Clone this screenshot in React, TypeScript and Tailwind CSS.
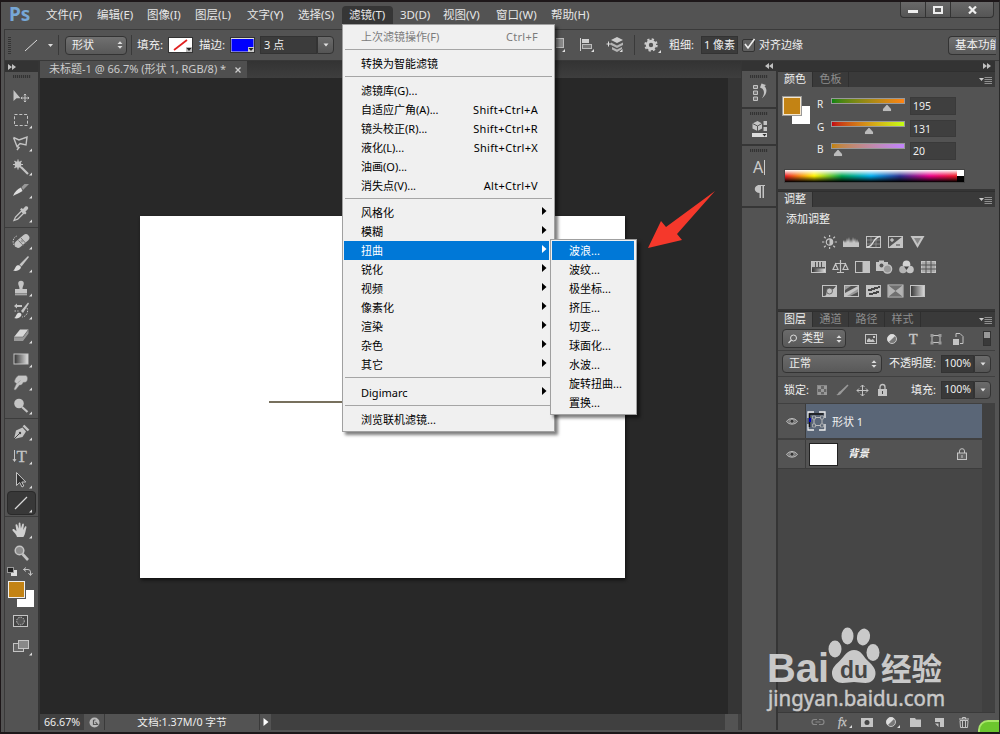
import { ReactNode } from 'react';
import clsx from 'clsx';

const menus: [string, string][] = [
  ['文件(F)', 'w-[51px]'],
  ['编辑(E)', 'w-[50px]'],
  ['图像(I)', 'w-[48px]'],
  ['图层(L)', 'w-[52px]'],
  ['文字(Y)', 'w-[51px]'],
  ['选择(S)', 'w-[51px]'],
  ['滤镜(T)', 'w-[51px]'],
  ['3D(D)', 'w-[43px]'],
  ['视图(V)', 'w-[53px]'],
  ['窗口(W)', 'w-[55px]'],
  ['帮助(H)', 'w-[60px]'],
];

type Item = { label: string; keys?: string; sub?: boolean; disabled?: boolean; active?: boolean };

const filterMenu: Item[][] = [
  [{ label: '上次滤镜操作(F)', keys: 'Ctrl+F', disabled: true }],
  [{ label: '转换为智能滤镜' }],
  [
    { label: '滤镜库(G)...' },
    { label: '自适应广角(A)...', keys: 'Shift+Ctrl+A' },
    { label: '镜头校正(R)...', keys: 'Shift+Ctrl+R' },
    { label: '液化(L)...', keys: 'Shift+Ctrl+X' },
    { label: '油画(O)...' },
    { label: '消失点(V)...', keys: 'Alt+Ctrl+V' },
  ],
  [
    { label: '风格化', sub: true },
    { label: '模糊', sub: true },
    { label: '扭曲', sub: true, active: true },
    { label: '锐化', sub: true },
    { label: '视频', sub: true },
    { label: '像素化', sub: true },
    { label: '渲染', sub: true },
    { label: '杂色', sub: true },
    { label: '其它', sub: true },
  ],
  [{ label: 'Digimarc', sub: true }],
  [{ label: '浏览联机滤镜...' }],
];

const distortMenu = ['波浪...', '波纹...', '极坐标...', '挤压...', '切变...', '球面化...', '水波...', '旋转扭曲...', '置换...'];

const L = '#c4c4c4';

// every tool glyph is drawn on a 33x24 tile, centred on 16,12
const tools: Record<string, ReactNode> = {
  move: (
    <>
      <path d="M8.500 6v11l3-2.800h4z" fill={L} />
      <path d="M20 10v8M16 14h8M18.800 11.200 20 10l1.200 1.200M18.800 16.800 20 18l1.200-1.200M17.200 12.800 16 14l1.200 1.200M22.800 12.800 24 14l-1.200 1.200" stroke={L} fill="none" />
    </>
  ),
  marquee: <rect x="9.500" y="6.500" width="13" height="11" fill="none" stroke={L} strokeDasharray="3 1.800" />,
  lasso: <path d="M8.500 6.500 14 9l8-3-1 8-6-1.500-3 3-3.500-9M12 15.500l2 1-2 2.500" fill="none" stroke={L} strokeWidth="1.400" />,
  wand: (
    <>
      <path d="M13 4.500v10M8 9.500h10M9.500 6l7 7M16.500 6l-7 7" stroke={L} strokeWidth="1.200" />
      <circle cx="13" cy="9.500" r="3.300" fill={L} />
      <path d="m16 12 7 7" stroke={L} strokeWidth="2.200" />
    </>
  ),
  slice: (
    <>
      <path d="M8 18c1.500-4 4-6.500 8-8.500l1.500 3.500C14 15 11 16.500 8 18z" fill="#dedede" />
      <path d="m16.500 9 3-3H24l-6 6z" fill="#989898" />
    </>
  ),
  eyedropper: (
    <>
      <path d="m9 18.500 1.500-3.500 6-6 2.200 2.200-6 6z" fill="none" stroke={L} strokeWidth="1.300" />
      <path d="m15 7.500 1.500-1.500 1.500 1 2-2.300c2-1.500 4.200.6 2.800 2.600L20.500 9.500l1 1.500-1.500 1.500z" fill={L} />
    </>
  ),
  heal: (
    <>
      <path d="M11 17.500c-4-1-4-9 1-10.500" fill="none" stroke={L} strokeDasharray="1.500 1" />
      <rect x="8.500" y="8.500" width="17" height="7" rx="3.500" transform="rotate(-40 17 12)" fill={L} />
      <path d="m13.500 11.500 4.800 5M16 9l5 5.500" stroke="#777" />
      <path d="M15.500 12h3M17 10.500v3" stroke="#888" strokeWidth=".8" />
    </>
  ),
  brush: (
    <>
      <path d="m14.500 12.500 8.500-8.500 1 1-7.500 9.500z" fill={L} />
      <path d="M8 18.500c2-.5 2-4 4-5s5 1 3.500 3-4.500 3-7.500 2z" fill="#dcdcdc" />
    </>
  ),
  stamp: <path d="M13.200 7.500a2.800 2.800 0 1 1 5.600 0c0 2-1.300 2.500-1.300 5.500H22v4.500H10V13h4.500c0-3-1.300-3.500-1.300-5.500zM10 18.300h12v1H10z" fill={L} />,
  history: (
    <>
      <path d="m16 12 7-8.500 1 1-6 9.500z" fill={L} />
      <path d="M9 19c2-.5 2-4 4-5s4.500 1 3 3-4 3-7 2z" fill="#dcdcdc" />
      <path d="M9 7 12 4.500V6h5v2h-5v1.500z" fill={L} />
      <path d="M9.500 12h4M22 9c2 4-1 9-5 9" fill="none" stroke={L} strokeDasharray="1.500 1.300" />
    </>
  ),
  eraser: (
    <>
      <path d="m9 14 6-7.500h8.500L18 14z" fill="#d8d8d8" />
      <path d="M9 14h9v4H9zM18 14l5.500-7.500v4L18 18z" fill="#999" />
      <path d="M9 14h9l5.500-7.500" stroke="#666" fill="none" strokeWidth=".6" />
    </>
  ),
  gradient: (
    <>
      <defs>
        <linearGradient id="tool-grad">
          <stop stopColor="#333" />
          <stop offset="1" stopColor="#ddd" />
        </linearGradient>
      </defs>
      <rect x="9" y="7" width="14" height="10" fill="url(#tool-grad)" stroke={L} />
    </>
  ),
  smudge: <path d="M9 19 11.500 13.500 9.500 12c0-2 1.500-5.500 4-6.500H21c2 1 2 5 0 6.500l-3 .5c-.5 2-2 2.800-3.500 2.500L11 19.500c-.8.700-1.800.5-2-.5zm3.500-6 3-2.500" fill={L} stroke="#777" strokeWidth=".5" />,
  dodge: (
    <>
      <circle cx="14" cy="9.500" r="4.800" fill={L} />
      <path d="m17 13 5.500 5" stroke={L} strokeWidth="2.200" />
    </>
  ),
  pen: (
    <>
      <path d="m9 19 2-8.500 6.500-3 3.500 4-3.500 5.500z" fill={L} />
      <path d="m18.500 5.500 5 5" stroke={L} strokeWidth="2.400" />
      <path d="m9 19 5.500-5.500" stroke="#444" />
      <circle cx="15" cy="13" r="1.200" fill="#444" />
    </>
  ),
  type: (
    <>
      <path d="M9.500 6v11M8 15l1.500 2.500L11 15" fill="none" stroke={L} />
      <text x="11.500" y="17.500" fontSize="17" fill={L} stroke={L} strokeWidth=".3" className="font-['Liberation_Serif',serif]">T</text>
    </>
  ),
  path: <path d="M11.500 4.500v13l3.200-3 2.300 4.500 1.800-1-2-4h4z" fill="#333" stroke={L} />,
  line: <path d="M10 17 22 5" stroke="#d8d8d8" strokeWidth="1.200" />,
  hand: <path d="M12 19c-.5-2.500-3-4.500-4.500-6.500-.3-1.500 1-1.800 2-1l2 1.700L10.500 7c0-1 1.500-1.200 1.800-.2l1.300 4 .1-5.500c.2-1 1.600-1 1.700 0l.5 5.300 1.400-4.600c.4-.9 1.600-.6 1.600.4l-.7 5.600 1.700-3.200c.6-.9 1.800-.3 1.500.7-.8 3-1 6.500-3 9.500z" fill="#d0d0d0" />,
  zoom: (
    <>
      <path d="m17.500 13 5.500 6" stroke={L} strokeWidth="2.600" />
      <circle cx="14.500" cy="9.500" r="4.300" fill="#8c8c8c" stroke={L} strokeWidth="1.500" />
    </>
  ),
};

const toolGroups = [
  ['move', 'marquee', 'lasso', 'wand', 'slice', 'eyedropper'],
  ['heal', 'brush', 'stamp', 'history', 'eraser', 'gradient', 'smudge', 'dodge'],
  ['pen', 'type', 'path', 'line'],
  ['hand', 'zoom'],
];

function Grip() {
  return (
    <div className="mx-auto mt-[3px] h-[3px] w-[18px] bg-[repeating-linear-gradient(90deg,#333_0,#333_1px,#4d4d4d_1px,#4d4d4d_2px)]" />
  );
}

function Chevrons({ left }: { left?: boolean }) {
  return (
    <svg width="8" height="6" viewBox="0 0 8 6" className={left ? 'rotate-180' : ''}>
      <path d="M0 0l4 3-4 3zM4 0l4 3-4 3z" fill="#c0c0c0" />
    </svg>
  );
}

function UpDown() {
  return (
    <svg width="6" height="8" viewBox="0 0 6 8" className="ml-auto">
      <path d="M.500 3 3 .300 5.500 3zM.500 5 3 7.700 5.500 5z" fill="#ddd" />
    </svg>
  );
}

function DropButton() {
  return (
    <div className="flex w-[17px] items-center justify-center rounded-r-sm border border-[#333] bg-gradient-to-b from-[#6b6b6b] to-[#555]">
      <svg width="6" height="4" viewBox="0 0 6 4">
        <path d="M.500.500h5L3 3.500z" fill="#e0e0e0" />
      </svg>
    </div>
  );
}

function Tool({ name }: { name: string }) {
  return (
    <div
      className={clsx(
        'flex h-[23.6px] justify-center',
        name === 'line' && 'mx-[2px] rounded-sm border border-[#2a2a2a] bg-[#383838]',
      )}
    >
      <svg width="33" height="24" viewBox="0 0 33 24" className="shrink-0">
        {tools[name]}
        {name !== 'move' && name !== 'zoom' && <path d="M27 17.500v3h-3z" fill="#ddd" />}
      </svg>
    </div>
  );
}

function Toolbox() {
  return (
    <div className="flex w-[33px] flex-col bg-[#535353]">
      <div className="flex h-[11px] shrink-0 items-center bg-[#333] pl-[3px]">
        <Chevrons />
      </div>
      <Grip />
      <div className="pt-[6px]">
        {toolGroups.map((group, i) => (
          <div key={i} className={i ? 'mt-px border-t border-[#3c3c3c] pt-px' : ''}>
            {group.map(name => (
              <Tool key={name} name={name} />
            ))}
          </div>
        ))}
      </div>
      <div className="mt-[2px] flex items-center justify-between pr-[5px] pl-[2px]">
        <svg width="10" height="9" viewBox="0 0 10 9">
          <rect x="4" y="3" width="6" height="6" fill="#ddd" />
          <rect x=".5" y=".5" width="6" height="5" fill="#222" stroke="#999" />
        </svg>
        <svg width="10" height="9" viewBox="0 0 10 9">
          <path d="M3 .500.500 2.500 3 4.500M.500 2.500H5q2.500 0 2.500 2.500v3M5.500 6l2 2.500 2-2.500" fill="none" stroke={L} />
        </svg>
      </div>
      <div className="mt-[5px] grid h-[27px] w-[33px] grid-cols-[17px_9px] grid-rows-[17px_9px] pl-[3px]">
        <div className="z-10 col-start-1 row-start-1 border border-[#eee] bg-[#c38314] outline outline-[#555]" />
        <div className="col-start-1 col-end-3 row-start-1 row-end-3 mt-[9px] ml-[9px] bg-white" />
      </div>
      <svg width="33" height="52" viewBox="0 0 33 52" className="mt-[2px]">
        <rect x="8.500" y="5.500" width="14" height="11" fill="#444" stroke={L} />
        <circle cx="15.500" cy="11" r="3.800" fill="#555" stroke={L} strokeDasharray="1.500 1" />
        <rect x="8.500" y="33.500" width="10" height="8" fill="#666" stroke={L} />
        <rect x="13.500" y="30.500" width="10" height="8" fill="#888" stroke={L} />
        <path d="M27 42.500v3h-3z" fill="#ddd" />
      </svg>
    </div>
  );
}

function OptionsBar() {
  return (
    <div className="flex h-[31px] items-center overflow-hidden border-b border-[#383838] bg-[#535353] text-[11.500px] text-[#f0f0f0]">
      <div className="ml-[3px] h-[18px] w-[3px] bg-[repeating-linear-gradient(0deg,#333_0,#333_1px,#555_1px,#555_2px)]" />
      <svg width="32" height="16" viewBox="0 0 32 16" className="ml-[13px]">
        <path d="M1 14 13 3" stroke="#ddd" />
        <path d="M24 7h5l-2.500 3z" fill="#ddd" />
      </svg>
      <div className="ml-[2px] h-5 w-px bg-[#3a3a3a]" />
      <div className="ml-[6px] flex h-[19px] w-[62px] items-center rounded-sm border border-[#333] bg-gradient-to-b from-[#707070] to-[#595959] pr-[3px] pl-[6px] text-[11px]">
        形状
        <UpDown />
      </div>
      <div className="ml-[4px] h-5 w-px bg-[#3a3a3a]" />
      <span className="ml-[5px] w-[30px]">填充:</span>
      <svg width="25" height="16" viewBox="0 0 25 16" className="ml-[1px]">
        <rect x=".5" y=".5" width="24" height="15" fill="#fff" stroke="#333" />
        <path d="M6 13 19 3" stroke="#e02020" strokeWidth="1.700" />
        <rect x="18" y="10" width="6" height="5" fill="#bbb" />
        <path d="M18.500 11h5L21 14z" fill="#222" />
      </svg>
      <span className="ml-[6px] w-[30px]">描边:</span>
      <svg width="25" height="16" viewBox="0 0 25 16" className="ml-[1px]">
        <rect x=".5" y=".5" width="24" height="15" fill="#ddd" stroke="#333" />
        <rect x="1.500" y="2" width="22" height="12.500" fill="#0000fd" />
        <rect x="18" y="10" width="6" height="5" fill="#ccc" />
        <path d="M18.500 11h5L21 14z" fill="#222" />
      </svg>
      <div className="ml-[5px] flex h-[18px]">
        <div className="flex w-[57px] items-center border border-[#333] bg-[#3b3b3b] pl-[3px] text-[11px]">3 点</div>
        <DropButton />
      </div>
      <svg width="78" height="22" viewBox="0 0 78 22" className="ml-[222px]">
        <rect x="-4" y="4.500" width="11.500" height="9" fill="#888" stroke="#bbb" />
        <path d="M9 15v3H6zM38 15v3h-3zM66.500 15v3h-3z" fill="#ddd" />
        <path d="M24.500 4v13" stroke="#d0d0d0" />
        <rect x="26" y="5" width="7" height="4" fill="#d0d0d0" />
        <rect x="26.500" y="10.500" width="9" height="4" fill="#777" stroke="#bbb" />
        <path d="M50.500 10h4.500M52.500 7.500v5" stroke="#ddd" />
        <path d="m61 3 6 3-6 3-6-3z" fill="#ccc" />
        <path d="m55 8.500 6 3 6-3V11l-6 3-6-3zM56 13l5 2.500 5-2.500v2L61 18l-5-2.500z" fill="#b4b4b4" />
      </svg>
      <div className="h-5 w-px bg-[#3a3a3a]" />
      <svg width="20" height="18" viewBox="0 0 20 18" className="ml-[8px]">
        <circle cx="8" cy="9" r="5.700" fill="none" stroke="#ccc" strokeWidth="2" strokeDasharray="2.240 2.240" />
        <circle cx="8" cy="9" r="3.700" fill="none" stroke="#ccc" strokeWidth="3" />
        <path d="M18 14v3h-3z" fill="#ddd" />
      </svg>
      <span className="ml-[6px] w-[30px] text-[11px]">粗细:</span>
      <div className="ml-[2px] flex h-[18px] w-[37px] items-center justify-center border border-[#333] bg-[#3b3b3b] text-[11px] whitespace-nowrap">1 像素</div>
      <svg width="14" height="14" viewBox="0 0 14 14" className="ml-[4px]">
        <rect x=".5" y="1.500" width="12" height="12" rx="1.500" fill="#606060" stroke="#333" />
        <path d="m3 6 3 4 6.500-9" fill="none" stroke="#eee" strokeWidth="1.600" />
      </svg>
      <span className="ml-[3px] w-[50px] text-[11px]">对齐边缘</span>
      <div className="ml-auto flex h-[19px] w-[48px] items-center overflow-hidden rounded-l-sm border border-r-0 border-[#333] bg-gradient-to-b from-[#707070] to-[#595959] pl-[6px] whitespace-nowrap">
        基本功能
      </div>
      <div className="w-[3px]" />
    </div>
  );
}

function PanelTabs({ tabs }: { tabs: string[] }) {
  return (
    <div className="flex h-4 shrink-0 items-stretch border-t border-[#2f2f2f] bg-[#3a3a3a] text-[11px] leading-[13px]">
      {tabs.map((tab, i) => (
        <span
          key={tab}
          className={clsx(
            'flex justify-center border-r border-[#2f2f2f]',
            i === 0 ? 'w-[35px] bg-[#535353] text-[#eee]' : 'w-[36px] text-[#8d8d8d]',
          )}
        >
          {tab}
        </span>
      ))}
      <svg width="13" height="8" viewBox="0 0 13 8" className="mt-[4px] mr-[3px] ml-auto">
        <path d="M0 2h5L2.500 5z" fill="#ccc" />
        <path d="M5.500 1.500H13M5.500 3.500H13M5.500 5.500H13M5.500 7.500H13" stroke="#999" strokeWidth=".9" />
      </svg>
    </div>
  );
}

const channels = [
  { name: 'R', value: 195, bar: 'from-[#008314] to-[#ff8314]' },
  { name: 'G', value: 131, bar: 'from-[#c30014] to-[#c3ff14]' },
  { name: 'B', value: 20, bar: 'from-[#c38300] to-[#c383ff]' },
];

function ColorPanel() {
  return (
    <div className="flex h-[118px] flex-col">
      <PanelTabs tabs={['颜色', '色板']} />
      <div className="flex h-[102px] flex-col bg-[#535353] pt-[10px]">
        <div className="flex">
          <div className="grid h-[27px] w-[39px] shrink-0 grid-cols-[18px_9px] grid-rows-[18px_9px] pl-[5px]">
            <div className="z-10 col-start-1 row-start-1 border border-[#f5e6cc] bg-[#c38314] outline outline-[#999]" />
            <div className="col-start-1 col-end-3 row-start-1 row-end-3 mt-[9px] ml-[9px] bg-white" />
          </div>
          <div className="flex flex-col gap-[5px]">
            {channels.map(c => (
              <div key={c.name} className="flex h-[17.500px] text-[#eee]">
                <span className="w-[14px] text-[10px] leading-[15px]">{c.name}</span>
                <div className="mt-[1px] w-[74px]">
                  <div className={clsx('h-[6px] border border-[#999] bg-gradient-to-r', c.bar)} />
                  <svg width="10" height="8" viewBox="0 0 10 8" style={{ marginLeft: (c.value / 255) * 72 - 4 }}>
                    <path d="M5 0 9.500 5v2.500h-9V5z" fill="#bbb" stroke="#444" strokeWidth=".7" />
                  </svg>
                </div>
                <div className="ml-[5px] w-[46px] border border-[#3a3a3a] bg-[#3f3f3f] pl-[2px] text-[10.500px] leading-[17px]">{c.value}</div>
              </div>
            ))}
          </div>
        </div>
        <div className="mt-[9px] ml-[6px] flex h-[14px] w-[181px] border border-[#444]">
          <div className="grow bg-[linear-gradient(180deg,#fff,#fff0_50%,#0000_50%,#000),linear-gradient(90deg,#ec1c24,#fff200_17%,#00a651_33%,#00aeef_50%,#2e3192_67%,#ec008c_84%,#ed1c24)]" />
          <div className="w-[7px] bg-[linear-gradient(#fff_50%,#000_50%)]" />
        </div>
      </div>
    </div>
  );
}

const frame = <rect x="1.500" y="1.500" width="14" height="11" fill="none" stroke={L} />;

const adjustRows: ReactNode[][] = [
  [
    <>
      <circle cx="8.500" cy="7" r="3.200" fill="none" stroke={L} strokeWidth="1.200" />
      <path d="M8.500 3.800a3.200 3.200 0 0 1 0 6.400zM8 0h1.200v2H8zM8 12h1.200v2H8z" fill={L} />
      <path d="M1 7h2.300M13.700 7H16M3 1.800l1.700 1.500M14 1.800l-1.700 1.500M3 12.200l1.700-1.500M14 12.200l-1.700-1.500" stroke={L} strokeWidth="1.200" />
    </>,
    <path d="M0 12V7l1-2 1 3V5l1 3 1-5 1 4 1-5 1 6 1-4 1 4 1-6 1 5 1-4 1 5 1-4 1 4 1-2v6z" fill={L} />,
    <>
      {frame}
      <path d="M2 5h13M2 9h13M6 2v10M11 2v10" stroke="#999" strokeWidth=".7" />
      <path d="M2 12c7 0 5-9 13-10.500" fill="none" stroke="#ddd" strokeWidth="1.300" />
    </>,
    <>
      {frame}
      <path d="M15.500 1.500v11h-14z" fill={L} />
      <path d="M3 5h4M5 3v4" stroke="#ddd" />
      <path d="M9 10h4" stroke="#444" />
    </>,
    <>
      <path d="M1.500 1h14l-7 12z" fill="#c4c4c4" />
      <path d="M5 3h7l-3.500 6z" fill="#888" />
    </>,
  ],
  [
    <>
      {frame}
      <path d="M2 2h3v5H2zM6 2h2v5H6zM9 2h2v5H9zM12 2h3v5h-3z" fill="#bbb" />
      <path d="M2 8.500h13V12H2z" fill="url(#tool-grad)" />
    </>,
    <path d="M8.500 0v3M3 3.500h11M8.500 3v9M5 12.500h7M3.500 4 1 9.500h5zM13.500 4 11 9.500h5z" fill="none" stroke={L} strokeWidth="1.200" />,
    <>
      {frame}
      <path d="M8.500 2H15v10H8.500z" fill={L} />
    </>,
    <>
      <path d="M0 2h3V.500h5V2h4v4a5 5 0 0 0-4 5H0z" fill={L} />
      <circle cx="5.500" cy="5.500" r="2" fill="#555" />
      <circle cx="11.500" cy="9" r="4.200" fill="#999" stroke={L} strokeWidth="1.200" />
    </>,
    <>
      <circle cx="8.500" cy="4.300" r="3.800" fill="#d4d4d4" />
      <circle cx="5" cy="9.500" r="3.800" fill="#b4b4b4" />
      <circle cx="12" cy="9.500" r="3.800" fill="#c4c4c4" />
      <path d="M6 6.500h5L8.500 10z" fill="#444" />
    </>,
    <>
      <rect x="1.500" y="1.500" width="14" height="11" fill="#aaa" stroke={L} />
      <path d="M1 5h15M1 9h15M6 1v12M11 1v12" stroke="#555" />
    </>,
  ],
  [
    <>
      {frame}
      <path d="M15 2v10H3c4 0 1-4 4-6s4 2 8-4z" fill={L} />
      <circle cx="8.500" cy="7" r="3" fill={L} stroke="#555" strokeWidth=".8" />
    </>,
    <>
      {frame}
      <path d="M2 2h6L2 6zM15 4v4l-8 4H2v-1z" fill="#999" />
      <path d="m2 9 13-7v3L4 12H2z" fill={L} />
    </>,
    <>
      <rect x="1" y="1" width="15" height="12" fill={L} />
      <path d="M3 7V5h3V4h3V3h4V2h2v2h-2v1h-3v1H7v1zM4 11V9h4V8h3V7h3v2h-2v1H8v1z" fill="#444" />
    </>,
    <>
      <rect x="1" y="1" width="15" height="12" fill="#888" stroke={L} />
      <path d="M1.500 1.500 8.500 7l7-5.500zM1.500 12.500 8.500 7l7 5.500z" fill="#707070" />
      <path d="M1.500 1.500 8.500 7l-7 5.500zM15.500 1.500 8.500 7l7 5.500z" fill="#b4b4b4" />
    </>,
    <rect x="1.500" y="1.500" width="14" height="11" fill="url(#tool-grad)" stroke={L} />,
  ],
];

function AdjustPanel() {
  return (
    <div className="flex h-[118px] flex-col bg-[#535353]">
      <PanelTabs tabs={['调整']} />
      <span className="mt-[4px] ml-[8px] text-[11px] leading-4 text-[#f2f2f2]">添加调整</span>
      <div className="mt-[8px] flex w-[190px] flex-col items-center gap-[10.500px]">
        {adjustRows.map((row, i) => (
          <div key={i} className="flex gap-[5px]">
            {row.map((icon, j) => (
              <svg key={j} width="17" height="14" viewBox="0 0 17 14">
                {icon}
              </svg>
            ))}
          </div>
        ))}
      </div>
    </div>
  );
}

function Percent() {
  return (
    <div className="flex h-[18px]">
      <div className="flex w-[33px] items-center justify-center border border-[#333] bg-[#393939] text-[10.500px]">100%</div>
      <DropButton />
    </div>
  );
}

function Eye() {
  return (
    <div className="flex w-[28px] shrink-0 items-center justify-center border-r border-[#3c3c3c]">
      <svg width="12" height="8" viewBox="0 0 12 8">
        <path d="M.500 4.500C3 .500 9 .500 11.500 4.500 9 8 3 8 .500 4.500z" fill="#777" stroke="#bbb" />
        <circle cx="6" cy="4.200" r="2" fill="#333" stroke="#ccc" strokeWidth=".6" />
      </svg>
    </div>
  );
}

function LayersPanel() {
  return (
    <div className="flex min-h-0 grow flex-col bg-[#535353] text-[11px] text-[#f0f0f0]">
      <PanelTabs tabs={['图层', '通道', '路径', '样式']} />
      <div className="flex h-[24px] shrink-0 items-center border-b border-[#404040] pl-[4px]">
        <div className="flex h-[19px] w-[64px] items-center rounded-sm border border-[#333] bg-gradient-to-b from-[#6b6b6b] to-[#595959] pr-[3px] pl-[5px] text-[11px]">
          <svg width="10" height="10" viewBox="0 0 10 10" className="mr-[4px]">
            <circle cx="5.500" cy="4" r="3" fill="none" stroke="#ddd" />
            <path d="m3.500 6-3 3" stroke="#ddd" strokeWidth="1.200" />
          </svg>
          类型
          <UpDown />
        </div>
        <svg width="102" height="14" viewBox="0 0 102 14" className="ml-[17px]">
          <rect x="2.500" y="2.500" width="11" height="9" fill="none" stroke={L} />
          <path d="M4 10V8l2-2 2 2 2-1 2 3zM10 4h2v2h-2z" fill={L} />
          <circle cx="29" cy="7" r="4.500" fill="#777" stroke={L} />
          <path d="M32.300 3.700A4.600 4.600 0 0 0 25.700 10.300z" fill="#ddd" />
          <text x="46" y="12" fontSize="14" fill={L} stroke={L} strokeWidth=".5" className="font-['Liberation_Serif',serif]">T</text>
          <rect x="69" y="3.500" width="8" height="7" fill="none" stroke={L} />
          <path d="M67.500 2h3v3h-3zM75.500 2h3v3h-3zM67.500 9.500h3v3h-3zM75.500 9.500h3v3h-3z" fill="#999" />
          <path d="M93 5V1.500h4l3 3v7h-3" fill="none" stroke={L} />
          <rect x="90" y="7" width="6" height="6" fill={L} />
        </svg>
        <div className="mr-[4px] ml-auto h-[15px] w-[8px] border border-[#333] bg-[linear-gradient(#999_45%,#3a3a3a_45%)]" />
      </div>
      <div className="flex h-[26px] shrink-0 items-center border-b border-[#404040] px-[4px]">
        <div className="flex h-[19px] w-[100px] items-center rounded-sm border border-[#333] bg-gradient-to-b from-[#6b6b6b] to-[#595959] pr-[4px] pl-[6px]">
          正常
          <UpDown />
        </div>
        <span className="mr-[5px] ml-auto">不透明度:</span>
        <Percent />
      </div>
      <div className="flex h-[27px] shrink-0 items-center border-b border-[#404040] pr-[4px] pl-[6px]">
        锁定:
        <svg width="74" height="14" viewBox="0 0 74 14" className="ml-[7px]">
          <rect x="1.500" y="2.500" width="9" height="9" fill="#666" stroke="#888" />
          <path d="M2 3h3v3H2zM8 3h3v3H8zM5 6h3v3H5zM2 9h3v3H2zM8 9h3v3H8z" fill="#999" />
          <path d="M20 12c2 0 2-3 4.500-4l7-6.500 1 1-6.500 7c-1 2-3 3-6 2.500z" fill="#999" />
          <path d="M46.500 2v11M41 7.500h11M44.500 4l2-2 2 2M44.500 11l2 2 2-2M43 5.500l-2 2 2 2M50 5.500l2 2-2 2" fill="none" stroke={L} />
          <rect x="62" y="6" width="9" height="7" fill={L} />
          <path d="M64 6V4q0-2.500 2.500-2.500T69 4v2" fill="none" stroke={L} strokeWidth="1.300" />
          <path d="M66 8h1v3h-1z" fill="#444" />
        </svg>
        <span className="mr-[5px] ml-auto">填充:</span>
        <Percent />
      </div>
      <div className="flex min-h-0 grow bg-[#464646]">
        <div className="flex w-[204px] flex-col">
          <div className="flex h-[36px] border-b-2 border-[#404040] bg-[#535353]">
            <Eye />
            <div className="flex grow items-center bg-[#5a6677] pl-[1px] text-[11px]">
              <svg width="19" height="20" viewBox="0 0 19 20">
                <path d="M1 7V1h6M12 1h6v6M18 13v6h-6M7 19H1v-6" fill="none" stroke="#eee" strokeWidth="1.300" />
                <path d="M2.500 16V3h14" fill="none" stroke="#111" strokeWidth="1.500" />
                <rect x="2" y="7" width="2" height="4" fill="#0000c0" />
                <rect x="7" y="6.500" width="8" height="8" fill="none" stroke="#bbb" />
                <path d="M5.500 5h3v3h-3zM13.500 5h3v3h-3zM5.500 13h3v3h-3zM13.500 13h3v3h-3z" fill="#5a6677" stroke="#bbb" strokeWidth=".7" />
              </svg>
              <span className="mt-[2px] ml-[6px]">形状 1</span>
            </div>
          </div>
          <div className="flex h-[29px] border-b border-[#3c3c3c] bg-[#535353]">
            <Eye />
            <div className="flex grow items-center pr-[15px] pl-[3px]">
              <div className="h-[23px] w-[29px] border border-[#222] bg-white" />
              <span className="ml-[10px] text-[10.500px] font-bold italic">背景</span>
              <svg width="10" height="12" viewBox="0 0 10 12" className="ml-auto">
                <rect x=".5" y="5" width="9" height="6.500" fill="#666" stroke={L} />
                <path d="M2.500 5V3q0-2.300 2.500-2.300T7.500 3v2" fill="none" stroke={L} />
                <path d="M4.500 7h1v3h-1z" fill={L} />
              </svg>
            </div>
          </div>
        </div>
        <div className="grow border-l border-[#404040] bg-[#404040]" />
      </div>
      <div className="flex h-[18px] shrink-0 items-center border-t border-[#3a3a3a] bg-[#535353]">
        <svg width="160" height="14" viewBox="0 0 160 14" className="ml-[32px]">
          <path d="M7 4.500H4.500a2.500 2.500 0 0 0 0 5H7M9 4.500h2.500a2.500 2.500 0 0 1 0 5H9M5.500 7h5" fill="none" stroke="#888" strokeWidth="1.200" />
          <text x="28" y="11" fontSize="12" fontStyle="italic" fill={L} stroke={L} strokeWidth=".3" className="font-['Liberation_Serif',serif]">fx</text>
          <path d="M42 10v3h-3zM90 10v3h-3z" fill="#ddd" />
          <rect x="51" y="3" width="12" height="9" fill={L} />
          <circle cx="57" cy="7.500" r="2.500" fill="#444" />
          <circle cx="81" cy="7" r="4.500" fill="#777" stroke={L} />
          <path d="M84.300 3.700A4.600 4.600 0 0 0 77.700 10.300z" fill="#ddd" />
          <path d="M100 3h5l1 1.500h5V12h-11z" fill={L} />
          <path d="M125 3h9v9h-4V7h-5z" fill={L} />
          <path d="M125 8.500h3.500V12z" fill={L} />
          <path d="M149 4h10M152.500 4V2.500h3V4M150 5.500h8l-.5 7h-7zM152.500 6v6M155.500 6v6" fill="none" stroke={L} />
        </svg>
      </div>
    </div>
  );
}

function Dock() {
  return (
    <div className="flex w-[34px] flex-col bg-[#535353]">
      <div className="h-[38px] border-b-2 border-[#363636] pt-px">
        <Grip />
        <svg width="34" height="26" viewBox="0 0 34 26">
          <path d="M11.500 7.500h4v3h-4zM11.500 13h4v3.500h-4zM11.500 19h4v3.500h-4z" fill="#777" stroke={L} />
          <path d="M18 9.500 19.500 5.500 24 7l-1.500 1.200c3.500 3.500 2 9-2.500 12 2.500-4 2.500-7 .5-9.500z" fill={L} />
        </svg>
      </div>
      <div className="h-[37px] border-b-2 border-[#363636]">
        <Grip />
        <svg width="34" height="26" viewBox="0 0 34 26">
          <path d="m10.500 8.500 5-2.500 4.500 2.500v5L15.500 16l-5-2.500z" fill={L} />
          <path d="m10.500 8.500 5 2.500 4.500-2.500M15.500 11v5" fill="none" stroke="#555" />
          <path d="M21.500 6H25v4h-3.500zM21.500 12H25v4h-3.500z" fill={L} />
          <rect x="10" y="18" width="15" height="4" fill="#ddd" />
          <path d="M20.500 19h4l-2 2.500z" fill="#333" />
        </svg>
      </div>
      <div className="h-[62px] border-b-2 border-[#363636]">
        <Grip />
        <div className="mt-[5px] flex flex-col items-center text-[#ccc]">
          <div className="flex h-[20px] items-center gap-[1px] text-[16px]">
            A<span className="h-[15px] w-px bg-[#ccc]" />
          </div>
          <svg width="14" height="16" viewBox="0 0 14 16" className="mt-[7px]">
            <path d="M6 1h7v1H6zM7.500 1H9v13H7.500zM10.500 1H12v13h-1.500z" fill={L} />
            <path d="M8 1v8C1 9 1 1 8 1z" fill={L} />
          </svg>
        </div>
      </div>
    </div>
  );
}

function MenuRow({ item }: { item: Item }) {
  return (
    <div
      className={clsx(
        'flex h-[19px] items-center pl-[17px]',
        item.disabled && 'text-[#7b7b7b]',
        item.active && 'mr-[4px] bg-[#0078d7] text-white',
        item.sub ? (item.active ? 'pr-[2px]' : 'pr-[6px]') : 'pr-[15px]',
      )}
    >
      {item.label}
      {item.keys && <span className="ml-auto tracking-[0.300px]">{item.keys}</span>}
      {item.sub && (
        <svg width="5" height="8" viewBox="0 0 5 8" className="mb-[4px] ml-auto">
          <path d="M0 0l4.500 4L0 8z" fill="currentColor" />
        </svg>
      )}
    </div>
  );
}

function FilterMenu() {
  return (
    <div className="absolute top-[22px] left-[341px] w-[213px] border border-[#a0a0a0] bg-[#f0f0f0] px-px py-[2px] text-[11px] leading-[19px] whitespace-nowrap text-black shadow-[3px_3px_3px_rgba(0,0,0,0.5)]">
      {filterMenu.map((group, i) => (
        <div key={i}>
          {i > 0 && <div className={clsx('mx-px mt-[3px] h-px bg-[#a5a5a5]', i === 4 ? 'mb-[5px]' : 'mb-[4px]')} />}
          {group.map(item => (
            <MenuRow key={item.label} item={item} />
          ))}
        </div>
      ))}
    </div>
  );
}

function DistortMenu() {
  return (
    <div className="absolute top-[237px] left-[549px] h-[176px] w-[87px] border border-[#a0a0a0] bg-[#f0f0f0] py-px pr-[2px] pl-px text-[11px] leading-[19px] whitespace-nowrap text-black shadow-[3px_3px_3px_rgba(0,0,0,0.5)]">
      {distortMenu.map((label, i) => (
        <div key={label} className={clsx('h-[19px] pl-[17px]', i === 0 && 'bg-[#0078d7] text-white')}>
          {label}
        </div>
      ))}
    </div>
  );
}

function Watermark() {
  return (
    <svg width="240" height="110" viewBox="760 620 240 110" className="absolute top-[618px] left-[759px]">
      <g fill="#c9c9c9">
        <text x="767" y="682" fontSize="40" fontWeight="bold" textLength="62" lengthAdjust="spacingAndGlyphs" className="font-['Liberation_Sans',sans-serif]">Bai</text>
        <ellipse cx="835" cy="649" rx="6.500" ry="8.500" />
        <ellipse cx="847.500" cy="636" rx="6" ry="8.500" />
        <ellipse cx="863.500" cy="637" rx="6.500" ry="8.500" transform="rotate(12 863.500 637)" />
        <ellipse cx="873" cy="652.500" rx="6.500" ry="8.500" />
        <path d="M854 650c7 0 9 6 13 10s9 8 8.500 14-5 9-10 9-8-1-11.500-1-6.500 1-11.500 1-10-3-10.500-9 4-9.500 8.500-14 7-10 13.500-10z" />
        <text x="881" y="680" fontSize="31" fontWeight="bold" textLength="61" lengthAdjust="spacingAndGlyphs">经验</text>
        <text x="768" y="706" fontSize="22" textLength="177" lengthAdjust="spacingAndGlyphs" stroke="#c9c9c9" strokeWidth=".5">jingyan.baidu.com</text>
      </g>
      <text x="840" y="678" fontSize="24" fontWeight="bold" fill="#464646" textLength="28" lengthAdjust="spacingAndGlyphs" className="font-['Liberation_Sans',sans-serif]">du</text>
    </svg>
  );
}

export default function App() {
  return (
    <div className="relative flex h-[734px] w-[1000px] flex-col overflow-hidden border-x border-y-2 border-t-[#1d1719] border-r-[#2a2a2a] border-b-[#1d1719] border-l-[#1d1719] bg-[#535353] font-['Noto_Sans','Noto_Sans_CJK_SC',sans-serif]">
      <div className="flex h-[27px] shrink-0 text-[11px] text-[#e6e6e6]">
        <span className="w-[38px] pl-[8px] text-[19px] leading-[24px] font-bold text-[#77a7d6]">Ps</span>
        {menus.map(([label, width]) => (
          <span
            key={label}
            className={clsx('mt-[4px] pl-[7px] text-[11.500px] leading-[18px] whitespace-nowrap', width, label === '滤镜(T)' && 'rounded-t-sm bg-[#363636]')}
          >
            {label}
          </span>
        ))}
        <div className="mr-[5px] ml-auto flex h-[16px] rounded-b-sm border border-t-0 border-[#333] bg-gradient-to-b from-[#696969] to-[#555]">
          <div className="flex w-[25px] items-end justify-center border-r border-[#333] pb-[4px]">
            <div className="h-[3px] w-[10px] bg-[#eee]" />
          </div>
          <div className="flex w-[25px] items-center justify-center border-r border-[#333]">
            <div className="h-[8px] w-[10px] border-2 border-[#eee]" />
          </div>
          <div className="flex w-[42px] items-center justify-center">
            <svg width="9" height="8" viewBox="0 0 9 8">
              <path d="m1 .500 7 7M8 .500l-7 7" stroke="#eee" strokeWidth="2.200" />
            </svg>
          </div>
        </div>
      </div>
      <div className="ml-[3px] flex min-h-0 grow flex-col border-t border-l border-[#3a3a3a]">
        <OptionsBar />
        <div className="mr-[4px] mb-[2px] flex min-h-0 grow bg-[#353535]">
          <Toolbox />
          <div className="ml-[2px] flex w-[701px] flex-col">
            <div className="flex h-[17px] shrink-0 bg-gradient-to-b from-[#333] to-[#3e3e3e]">
              <div className="flex w-[207px] items-center bg-[#4f4f4f] pl-[9px] text-[11px] whitespace-nowrap text-[#ccc]">
                未标题-1 @ 66.7% (形状 1, RGB/8) *
                <svg width="6" height="6" viewBox="0 0 6 6" className="mr-[6px] ml-auto">
                  <path d="M.500.500l5 5M5.500.500l-5 5" stroke="#ccc" strokeWidth="1.300" />
                </svg>
              </div>
            </div>
            <div className="flex min-h-0 grow">
              <div className="grow bg-[#282828] pt-[138px] pl-[100px]">
                <div className="h-[362px] w-[485px] bg-white pt-[185px] pl-[129px] shadow-[1px_2px_3px_#111]">
                  <div className="h-[2px] w-[90px] bg-[#77705d]" />
                </div>
              </div>
              <div className="w-[13px] bg-[#353535]" />
            </div>
            <div className="flex h-[16px] shrink-0 items-stretch bg-[#404040] text-[10.700px] leading-4 text-[#eee]">
              <span className="w-[44px] bg-[#404040] pl-[4px]">66.67%</span>
              <div className="flex w-[21px] items-center justify-center border-r border-[#3a3a3a] bg-[#535353]">
                <svg width="11" height="11" viewBox="0 0 11 11">
                  <circle cx="5.500" cy="5.500" r="5" fill="#bbb" />
                  <path d="M4.500 3v4.500h4L6.500 5M4.500 3h2" fill="none" stroke="#555" strokeWidth="1.200" />
                </svg>
              </div>
              <span className="w-[155px] border-r border-[#3a3a3a] bg-[#535353] text-center">文档:1.37M/0 字节</span>
              <div className="flex w-[11px] items-center justify-center bg-[#535353]">
                <svg width="6" height="8" viewBox="0 0 6 8">
                  <path d="M.500 0 5.500 4 .500 8z" fill="#fff" />
                </svg>
              </div>
              <div className="mr-[3px] ml-auto w-[13px] bg-[#535353]" />
            </div>
          </div>
          <div className="ml-px flex min-w-0 grow flex-col">
            <div className="flex h-[10px] shrink-0 items-center justify-between bg-[#333] pr-[4px] pl-[23px]">
              <Chevrons left />
              <Chevrons />
            </div>
            <div className="flex min-h-0 grow">
              <Dock />
              <div className="ml-[2px] flex min-w-0 grow flex-col gap-[2px]">
                <ColorPanel />
                <AdjustPanel />
                <LayersPanel />
              </div>
            </div>
          </div>
        </div>
      </div>
      <FilterMenu />
      <DistortMenu />
      <svg width="72" height="62" viewBox="645 188 72 62" className="absolute top-[186px] left-[644px]">
        <path d="M715 191 677 234l5 6-34 8 13-27 5 6z" fill="#f5382b" />
      </svg>
      <Watermark />
      <div className="absolute top-[718px] left-[977px] h-[30px] w-[34px] rounded-[10px] border-2 border-[#a8e66a] bg-[#6cc62e]" />
    </div>
  );
}
